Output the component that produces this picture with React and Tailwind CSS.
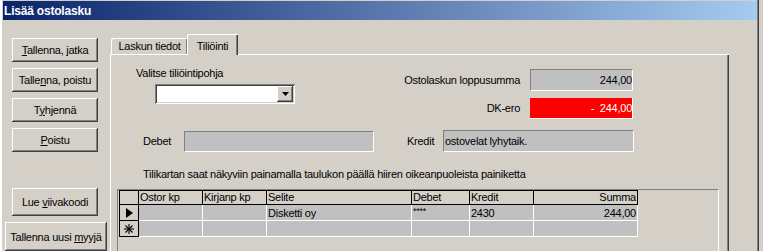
import React from "react";

const btn =
  "flex items-center justify-center bg-[#d4d0c8] shadow-[inset_-1px_-1px_#404040,inset_1px_1px_#ffffff,inset_-2px_-2px_#808080] text-black";
const sunken = "border-t border-l border-t-[#808080] border-l-[#808080] border-b border-r border-b-white border-r-white";

function Tri() {
  return (
    <svg width="7" height="10" viewBox="0 0 7 10">
      <polygon points="0,0 7,5 0,10" fill="#000" />
    </svg>
  );
}
function Star() {
  return (
    <svg width="10" height="10" viewBox="0 0 10 10">
      <g stroke="#000" strokeWidth="1.1">
        <line x1="5" y1="0" x2="5" y2="10" />
        <line x1="0" y1="5" x2="10" y2="5" />
        <line x1="1.5" y1="1.5" x2="8.5" y2="8.5" />
        <line x1="8.5" y1="1.5" x2="1.5" y2="8.5" />
      </g>
    </svg>
  );
}

const cols = [
  { w: "w-[20px]", h: "" },
  { w: "w-[64px]", h: "Ostor kp" },
  { w: "w-[64px]", h: "Kirjanp kp" },
  { w: "w-[145px]", h: "Selite" },
  { w: "w-[58px]", h: "Debet" },
  { w: "w-[64px]", h: "Kredit" },
  { w: "w-[104px]", h: "Summa", r: true },
];

const row1 = ["", "", "Disketti oy", "****", "2430", "244,00"];
const row2 = ["", "", "", "", "", ""];

function DataRow({ vals, icon }) {
  return (
    <div className="flex h-[16px]">
      <div className="w-[20px] h-full flex items-center justify-center bg-[#d4d0c8] border-l border-r border-b border-black">
        {icon}
      </div>
      {vals.map((v, i) => {
        const c = cols[i + 1];
        return (
          <div
            key={i}
            className={`${c.w} h-full bg-[#c0c0c0] border-r border-b border-white flex items-center px-[1px] leading-[14px] ${c.r ? "justify-end" : ""}`}
          >
            <span className={v === "****" ? "text-[9px] leading-[9px] -mt-[3px]" : ""}>{v}</span>
          </div>
        );
      })}
    </div>
  );
}

export default function App() {
  return (
    <div className="w-[763px] h-[251px] overflow-hidden bg-[#d4d0c8] font-['Liberation_Sans',Arial,sans-serif] text-[11px] tracking-[-0.25px] text-black">
      <div className="w-[759px] h-full shadow-[inset_2px_0_#ffffff,inset_1px_0_#d4d0c8,inset_-1px_0_#404040,inset_-2px_0_#808080] flex flex-col">
        {/* title bar */}
        <div className="ml-[3px] mt-[1px] w-[754px] h-[19px] shrink-0 bg-[linear-gradient(to_right,#0a246a,#a6caf0)] flex items-center pl-[1px]">
          <span className="text-white font-bold text-[12px] tracking-[-0.2px] leading-none">Lisää ostolasku</span>
        </div>
        {/* body */}
        <div className="flex flex-1 min-h-0">
          {/* left buttons */}
          <div className="w-[110px] shrink-0 flex flex-col pl-[12px] pt-[18px]">
            <div className={`${btn} w-[86px] h-[25px]`}>
              <span><u>T</u>allenna, jatka</span>
            </div>
            <div className={`${btn} w-[86px] h-[25px] mt-[6px]`}>
              <span>Talle<u>n</u>na, poistu</span>
            </div>
            <div className={`${btn} w-[86px] h-[25px] mt-[6px]`}>
              <span>T<u>y</u>hjennä</span>
            </div>
            <div className={`${btn} w-[86px] h-[25px] mt-[6px]`}>
              <span><u>P</u>oistu</span>
            </div>
            <div className={`${btn} w-[86px] h-[29px] mt-[36px]`}>
              <span>Lue <u>v</u>iivakoodi</span>
            </div>
            <div className={`${btn} w-[102px] h-[30px] mt-[6px] -ml-[7px] items-start pt-[7px]`}>
              <span>Tallenna uusi <u>m</u>yyjä</span>
            </div>
          </div>
          {/* right area */}
          <div className="flex flex-col flex-1 min-w-0">
            {/* tabs */}
            <div className="flex items-end mt-[14px] ml-[1px] h-[20px] shrink-0">
              <div className="w-[77px] h-[16px] bg-[#d4d0c8] shadow-[inset_1px_1px_#ffffff,inset_-1px_0_#404040,inset_-2px_0_#808080] rounded-tl-[2px] flex items-center justify-center pt-[1px]">
                Laskun tiedot
              </div>
              <div className="relative z-10 -ml-[1px] -mb-[1px] w-[51px] h-[21px] bg-[#d4d0c8] shadow-[inset_1px_1px_#ffffff,inset_-1px_0_#404040,inset_-2px_0_#808080] rounded-tl-[2px] flex items-start justify-center pt-[4px]">
                Tiliöinti
              </div>
            </div>
            {/* panel */}
            <div className="w-[619px] flex-1 bg-[#d4d0c8] shadow-[inset_1px_1px_#ffffff,inset_-1px_0_#404040,inset_-2px_0_#808080] flex flex-col">
              {/* top section */}
              <div className="flex">
                <div className="w-[290px] flex flex-col pl-[26px] pt-[12px]">
                  <div className="h-[14px] leading-[14px]">Valitse tiliöintipohja</div>
                  <div className="mt-[4px] ml-[19px] w-[140px] h-[20px] bg-white shadow-[inset_1px_1px_#808080,inset_-1px_-1px_#ffffff,inset_2px_2px_#404040,inset_-2px_-2px_#d4d0c8] flex justify-end items-center pr-[2px]">
                    <div className={`${btn} w-[16px] h-[16px]`}>
                      <svg width="7" height="4" viewBox="0 0 7 4">
                        <polygon points="0,0 7,0 3.5,4" fill="#000" />
                      </svg>
                    </div>
                  </div>
                </div>
                <div className="flex flex-col pt-[15px]">
                  <div className="flex h-[22px] items-center">
                    <div className="w-[120px] text-right">Ostolaskun loppusumma</div>
                    <div className={`ml-[10px] w-[103px] h-full bg-[#c0c0c0] ${sunken} flex items-center justify-end`}>
                      244,00
                    </div>
                  </div>
                  <div className="flex h-[21px] items-center mt-[7px]">
                    <div className="w-[120px] text-right">DK-ero</div>
                    <div className="ml-[10px] w-[103px] h-full bg-[#ff0000] border-r border-b border-white text-white flex items-center justify-end">
                      -&nbsp; 244,00
                    </div>
                  </div>
                </div>
              </div>
              {/* debet / kredit */}
              <div className="flex items-center h-[22px] mt-[11px] pl-[33px]">
                <div className="w-[41px]">Debet</div>
                <div className={`w-[190px] h-[21px] mt-[1px] bg-[#c0c0c0] ${sunken}`}></div>
                <div className="ml-[33px] w-[36px]">Kredit</div>
                <div className={`w-[191px] h-full bg-[#c0c0c0] ${sunken} flex items-center pl-[1px]`}>
                  ostovelat lyhytaik.
                </div>
              </div>
              {/* instruction */}
              <div className="mt-[15px] h-[14px] leading-[14px] pl-[33px]">
                Tilikartan saat näkyviin painamalla taulukon päällä hiiren oikeanpuoleista painiketta
              </div>
              {/* grid */}
              <div className="mt-[8px] ml-[7px] w-[602px] flex-1 border-t border-l border-[#808080] border-r border-r-white pl-[1px] flex flex-col">
                <div className="flex h-[15px]">
                  {cols.map((c, i) => (
                    <div
                      key={i}
                      className={`${c.w} h-full border-t border-b border-r border-black ${i === 0 ? "border-l" : ""} flex items-center px-[1px] leading-[13px] ${c.r ? "justify-end" : ""}`}
                    >
                      {c.h}
                    </div>
                  ))}
                </div>
                <DataRow vals={row1} icon={<Tri />} />
                <DataRow vals={row2} icon={<Star />} />
              </div>
            </div>
          </div>
        </div>
      </div>
    </div>
  );
}
